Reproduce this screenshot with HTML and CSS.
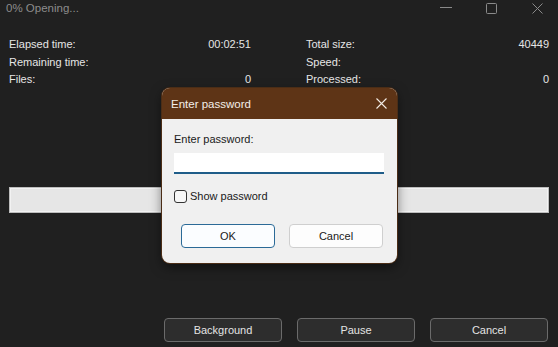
FILE: index.html
```html
<!DOCTYPE html>
<html lang="en">

<head>
    <meta charset="UTF-8">
    <meta name="viewport" content="width=device-width, initial-scale=1.0">
    <title>0% Opening...</title>
    <link rel="stylesheet" href="styles.css">
</head>

<body>
    <div class="window">
        <div class="titlebar">
            <span class="title">0% Opening...</span>
            <div class="controls">
                <svg class="ctl ctl-min" width="12" height="12" viewBox="0 0 12 12"><path d="M0 5.5H12" stroke="#8a8a8a" stroke-width="1"/></svg>
                <svg class="ctl ctl-max" width="11" height="11" viewBox="0 0 11 11"><rect x="0.5" y="0.5" width="10" height="10" rx="1" fill="none" stroke="#8a8a8a" stroke-width="1"/></svg>
                <svg class="ctl ctl-close" width="11" height="11" viewBox="0 0 11 11"><path d="M0.5 0.5L10.5 10.5M10.5 0.5L0.5 10.5" stroke="#8a8a8a" stroke-width="1"/></svg>
            </div>
        </div>

        <div class="stats">
            <div class="col">
                <div class="row"><span>Elapsed time:</span><span>00:02:51</span></div>
                <div class="row"><span>Remaining time:</span><span></span></div>
                <div class="row"><span>Files:</span><span>0</span></div>
            </div>
            <div class="col">
                <div class="row"><span>Total size:</span><span>40449</span></div>
                <div class="row"><span>Speed:</span><span></span></div>
                <div class="row"><span>Processed:</span><span>0</span></div>
            </div>
        </div>

        <div class="progress"></div>

        <div class="actions">
            <button class="dark-btn">Background</button>
            <button class="dark-btn">Pause</button>
            <button class="dark-btn">Cancel</button>
        </div>
    </div>

    <div class="dialog">
        <div class="dialog-head">
            <span>Enter password</span>
            <svg class="dialog-close" width="11" height="11" viewBox="0 0 11 11"><path d="M0.5 0.5L10.5 10.5M10.5 0.5L0.5 10.5" stroke="#f2ebe4" stroke-width="1.1"/></svg>
        </div>
        <div class="dialog-body">
            <label for="password">Enter password:</label>
            <input type="password" id="password" class="pw">
            <label class="check"><span class="box"></span>Show password</label>
            <div class="dialog-buttons">
                <button class="light-btn default">OK</button>
                <button class="light-btn">Cancel</button>
            </div>
        </div>
    </div>
</body>

</html>
```

FILE: styles.css
```css
body {
    font-family: "Liberation Sans", Arial, sans-serif;
    font-size: 11px;
    background-color: #202020;
    color: #e6e6e6;
    margin: 0;
    width: 558px;
    height: 347px;
    overflow: hidden;
    position: relative;
}

.titlebar {
    display: flex;
    justify-content: space-between;
    height: 17px;
    line-height: 17px;
    padding-left: 6px;
}

.title {
    color: #8c8c8c;
    font-size: 11.5px;
}

.controls {
    display: flex;
    align-items: flex-start;
}

.ctl {
    display: block;
    margin-top: 3px;
}

.ctl-min {
    margin-top: 2px;
    margin-right: 34px;
}

.ctl-max {
    margin-right: 35px;
}

.ctl-close {
    margin-right: 15px;
}

.stats {
    display: grid;
    grid-template-columns: 242px 243px;
    column-gap: 55px;
    padding: 19px 9px 0 9px;
}

.row {
    display: flex;
    justify-content: space-between;
    height: 17.5px;
    line-height: 17.5px;
}

.progress {
    margin: 98px 9px 0 9px;
    height: 24px;
    border: 1px solid #bdbdbd;
    background-color: #e6e6e6;
    box-shadow: inset 0 0 0 1px #f2f2f2;
}

.actions {
    display: flex;
    justify-content: flex-end;
    gap: 15px;
    margin-top: 105px;
    padding-right: 10px;
}

.dark-btn {
    width: 118px;
    height: 24px;
    background-color: #2d2d2d;
    color: #e4e4e4;
    border: 1px solid #6b6b6b;
    border-radius: 4px;
    font-family: inherit;
    font-size: 11px;
    padding: 0;
}

.dialog {
    position: absolute;
    left: 162px;
    top: 88px;
    width: 235px;
    height: 175px;
    border-radius: 8px;
    overflow: hidden;
    background-color: #f0f0f0;
    box-shadow: 0 0 0 1px #4b2d16, 0 4px 12px rgba(0, 0, 0, 0.5);
    color: #1a1a1a;
}

.dialog-head {
    display: flex;
    justify-content: space-between;
    align-items: center;
    height: 31px;
    padding: 0 10px 0 9px;
    background-color: #5e3416;
    color: #f4eee8;
    font-size: 11.5px;
}

.dialog-body {
    padding: 12px 12px 0 12px;
}

.dialog-body label {
    display: block;
    line-height: 16px;
}

.pw {
    display: block;
    width: 210px;
    height: 21px;
    margin-top: 6px;
    box-sizing: border-box;
    border: none;
    border-bottom: 2px solid #1f5d89;
    background-color: #fff;
    padding: 0 4px;
    outline: none;
}

.dialog-body .check {
    display: flex;
    align-items: center;
    gap: 3px;
    margin-top: 14px;
}

.box {
    width: 11px;
    height: 11px;
    border: 1px solid #333;
    border-radius: 3px;
    background-color: #f7f7f7;
}

.dialog-buttons {
    display: flex;
    gap: 14px;
    margin-top: 20px;
    padding-left: 7px;
}

.light-btn {
    width: 94px;
    height: 24px;
    background-color: #fdfdfd;
    border: 1px solid #cfcfcf;
    border-radius: 4px;
    font-family: inherit;
    font-size: 11px;
    color: #1a1a1a;
    padding: 0;
}

.light-btn.default {
    border-color: #2b6a97;
    background-color: #fbfdff;
}
```
